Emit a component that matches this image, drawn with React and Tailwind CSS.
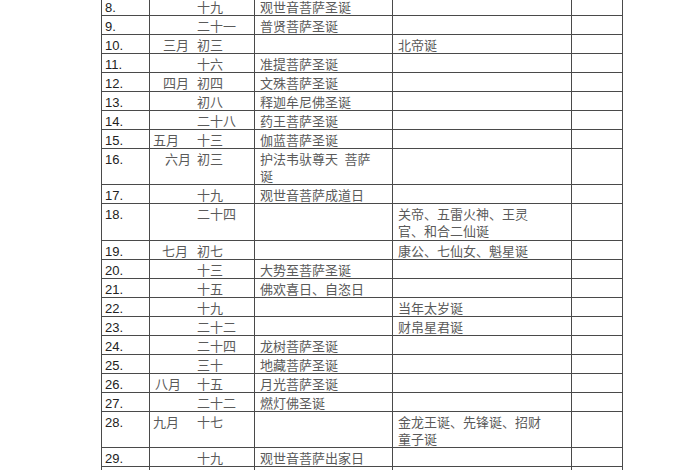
const rows = [
  { n: '8.', day: '十九', c3: ['观世音菩萨圣诞'] },
  { n: '9.', day: '二十一', c3: ['普贤菩萨圣诞'] },
  { n: '10.', month: '三月', mp: 'pl-[13px]', day: '初三', c4: ['北帝诞'] },
  { n: '11.', day: '十六', c3: ['准提菩萨圣诞'] },
  { n: '12.', month: '四月', mp: 'pl-[13px]', day: '初四', c3: ['文殊菩萨圣诞'] },
  { n: '13.', day: '初八', c3: ['释迦牟尼佛圣诞'] },
  { n: '14.', day: '二十八', c3: ['药王菩萨圣诞'] },
  { n: '15.', month: '五月', mp: 'pl-[3px]', day: '十三', c3: ['伽蓝菩萨圣诞'] },
  { n: '16.', month: '六月', mp: 'pl-[15px]', day: '初三', c3: ['护法韦驮尊天 菩萨', '诞'], h: 'h-[36px]' },
  { n: '17.', day: '十九', c3: ['观世音菩萨成道日'] },
  { n: '18.', day: '二十四', c4: ['关帝、五雷火神、王灵', '官、和合二仙诞'], h: 'h-[37px]' },
  { n: '19.', month: '七月', mp: 'pl-[12px]', day: '初七', c4: ['康公、七仙女、魁星诞'] },
  { n: '20.', day: '十三', c3: ['大势至菩萨圣诞'] },
  { n: '21.', day: '十五', c3: ['佛欢喜日、自恣日'] },
  { n: '22.', day: '十九', c4: ['当年太岁诞'] },
  { n: '23.', day: '二十二', c4: ['财帛星君诞'] },
  { n: '24.', day: '二十四', c3: ['龙树菩萨圣诞'] },
  { n: '25.', day: '三十', c3: ['地藏菩萨圣诞'] },
  { n: '26.', month: '八月', mp: 'pl-[5px]', day: '十五', c3: ['月光菩萨圣诞'] },
  { n: '27.', day: '二十二', c3: ['燃灯佛圣诞'] },
  { n: '28.', month: '九月', mp: 'pl-[3px]', day: '十七', c4: ['金龙王诞、先锋诞、招财', '童子诞'], h: 'h-[36px]' },
  { n: '29.', day: '十九', c3: ['观世音菩萨出家日'] },
  { n: '', day: '' },
];

const cjk = { fontFamily: '"Liberation Serif", "Noto Sans CJK SC", serif' };

function Lines({ lines }) {
  if (!lines) return null;
  return lines.map((l, i) => (
    <div key={i} className="whitespace-pre">
      {l.replace(' ', '  ')}
    </div>
  ));
}

function Row({ r }) {
  return (
    <div className={`flex border-b border-[#4a4a4a] ${r.h || 'h-[19px]'}`}>
      <div
        className="w-[48px] shrink-0 border-r border-[#4a4a4a] pl-[3px] pt-[2px] text-[13px] leading-[17px] text-[#222]"
        style={{ fontFamily: '"Liberation Sans", Arial, sans-serif' }}
      >
        {r.n}
      </div>
      <div className="w-[105px] shrink-0 border-r border-[#4a4a4a] pt-[2px] flex text-[13px] leading-[17px] text-[#5a5a5a]" style={cjk}>
        <div className={`w-[47px] shrink-0 ${r.mp || ''}`}>{r.month}</div>
        <div>{r.day}</div>
      </div>
      <div className="w-[138px] shrink-0 border-r border-[#4a4a4a] pl-[5px] pt-[2px] text-[13px] leading-[17px] text-[#5a5a5a]" style={cjk}>
        <Lines lines={r.c3} />
      </div>
      <div className="w-[179px] shrink-0 border-r border-[#4a4a4a] pl-[5px] pt-[2px] text-[13px] leading-[17px] text-[#5a5a5a]" style={cjk}>
        <Lines lines={r.c4} />
      </div>
      <div className="w-[51px] shrink-0 border-r border-[#4a4a4a]" />
    </div>
  );
}

export default function App() {
  return (
    <div className="w-[700px] h-[470px] overflow-hidden bg-white">
      <div className="ml-[101px] -mt-[3px] w-[522px] border-l border-[#4a4a4a]">
        {rows.map((r, i) => (
          <Row key={i} r={r} />
        ))}
      </div>
    </div>
  );
}
